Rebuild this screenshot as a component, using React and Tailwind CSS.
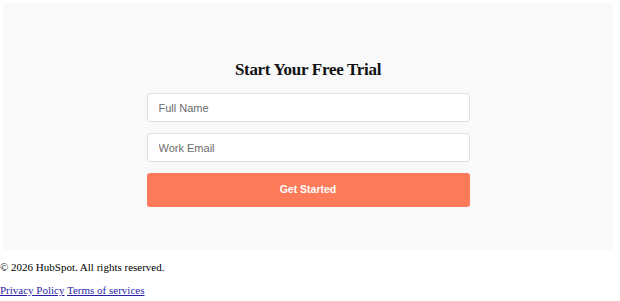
import React from 'react';

const serif = { fontFamily: '"Liberation Serif", "Times New Roman", serif' };
const sans = { fontFamily: '"Liberation Sans", Arial, sans-serif' };

export default function App() {
  return (
    <div className="bg-white text-black" style={serif}>
      {/* Trial form */}
      <section className="mt-[3px] ml-[3px] w-[610px] h-[247px] bg-[#f8f9fb] rounded-[2px] pt-[56px] flex flex-col items-center">
        <h2 className="text-[17px] leading-[22px] font-bold tracking-[-0.3px] text-[#111]">Start Your Free Trial</h2>
        <form className="mt-[12px] w-[323px] flex flex-col gap-[11px]" onSubmit={(e) => e.preventDefault()}>
          <input
            type="text"
            placeholder="Full Name"
            className="h-[29px] w-full bg-white border border-[#e0e0e0] rounded-[3px] px-[11px] text-[11px] text-[#333] placeholder:text-[#6b6b6b] outline-none"
            style={sans}
          />
          <input
            type="email"
            placeholder="Work Email"
            className="h-[29px] w-full bg-white border border-[#e0e0e0] rounded-[3px] px-[11px] text-[11px] text-[#333] placeholder:text-[#6b6b6b] outline-none"
            style={sans}
          />
          <button
            type="submit"
            className="h-[34px] w-full bg-[#ff7a59] rounded-[3px] text-white text-[10.5px] font-bold"
            style={sans}
          >
            Get Started
          </button>
        </form>
      </section>

      {/* Footer */}
      <footer className="text-[11px] leading-[14px]">
        <p className="mt-[10px]">© 2026 HubSpot. All rights reserved.</p>
        <p className="mt-[9px]">
          <a href="#" className="text-[#2b1fa6] underline">Privacy Policy</a>{' '}
          <a href="#" className="text-[#2b1fa6] underline">Terms of services</a>
        </p>
      </footer>
    </div>
  );
}
